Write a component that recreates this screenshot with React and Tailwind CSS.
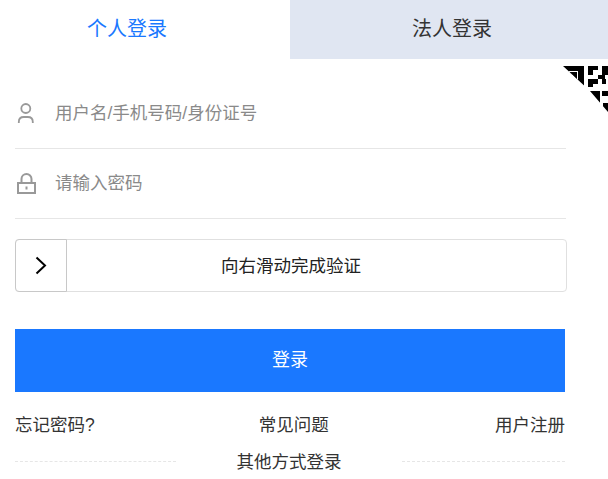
import React from 'react';

const FONT = "font-['Liberation_Sans','Noto_Sans_CJK_SC',sans-serif]";

const UserIcon = () => (
  <svg width="22" height="22" viewBox="0 0 22 22" fill="none" stroke="#999" strokeWidth="1.800">
    <circle cx="9.800" cy="5.500" r="4.500" />
    <path d="M2.800 20v-1c0-3 2-5 5-5h4c3 0 5 2 5 5v1" />
  </svg>
);

const LockIcon = () => (
  <svg width="22" height="22" viewBox="0 0 22 22" fill="none" stroke="#999" strokeWidth="2">
    <path d="M5.500 10V6a5 5 0 0 1 10 0v4" />
    <rect x="2" y="10" width="17" height="10" />
    <path d="M10.500 13.500v3" />
  </svg>
);

const Chevron = () => (
  <svg width="12" height="19" viewBox="0 0 12 19" fill="none" stroke="#000" strokeWidth="2">
    <path d="M1.500 1.500 10 9.500 1.500 17.500" />
  </svg>
);

// cut off corner of the QR switch
const QrCorner = () => (
  <svg className="absolute right-0 top-[66px]" width="45" height="46" viewBox="0 0 45 46">
    <defs>
      <clipPath id="corner">
        <polygon points="0,0 45,0 45,46 27,25" />
      </clipPath>
    </defs>
    <g clipPath="url(#corner)" fill="#000">
      <path d="M0 0h21v21H0z" />
      <path fill="#fff" d="M0 5h15v13H0z" />
      <path d="M7 6h7v7H7z" />
      <path d="M25 0h10v4H30v5H25zM39 0h6v9h-6zM35 9h7v4h-7zM25 13h10v5h-5v3H25zM39 13h4v5h-4z" />
      <path d="M27 25h10v21H27zM39 25h6v5h-6zM40 37h5v9h-5z" />
    </g>
  </svg>
);

const Field = ({ icon, placeholder }) => (
  <div className="flex h-[70px] items-center border-b border-[#e6e6e6]">
    <span className="ml-px flex w-[39px] items-center">{icon}</span>
    <span className="-mt-px text-[17.500px] text-[#8a8a8a]">{placeholder}</span>
  </div>
);

export default function App() {
  return (
    <div className={`relative h-[479px] w-[608px] overflow-hidden bg-white ${FONT}`}>
      <div className="flex h-[59px] text-xl">
        <div className="flex w-[290px] items-center justify-center pb-px pr-[36px] text-[#1a78ff]">个人登录</div>
        <div className="flex w-[318px] items-center justify-center bg-[#e0e6f2] pb-px pl-[6px] text-[#333]">法人登录</div>
      </div>

      <QrCorner />

      <div className="pl-[15px] pt-5">
        <div className="w-[551px]">
          <Field icon={<UserIcon />} placeholder="用户名/手机号码/身份证号" />
          <Field icon={<LockIcon />} placeholder="请输入密码" />
        </div>

        <div className="relative mt-5 flex h-[53px] w-[552px] items-center justify-center rounded border border-[#e0e0e0] pt-px text-[17.500px] text-[#222]">
          <div className="absolute -left-px -top-px flex h-[53px] w-[52px] items-center justify-center rounded-l border border-[#c8c8c8] bg-white">
            <Chevron />
          </div>
          向右滑动完成验证
        </div>

        <div className="mt-[37px] flex h-[63px] w-[550px] items-center justify-center bg-[#1a78ff] text-[18px] text-white">登录</div>

        <div className="mt-[20px] flex w-[550px] items-center justify-between text-[17.500px] leading-[26px] text-[#333]">
          <span>忘记密码?</span>
          <span className="mr-[2px]">常见问题</span>
          <span>用户注册</span>
        </div>

        <div className="mt-[10px] flex w-[550px] items-center justify-between text-[17.500px] leading-[26px] text-[#333]">
          <span className="w-[161px] border-t border-dashed border-[#e6e6e6]" />
          <span className="pt-px">其他方式登录</span>
          <span className="w-[163px] border-t border-dashed border-[#e6e6e6]" />
        </div>
      </div>
    </div>
  );
}
